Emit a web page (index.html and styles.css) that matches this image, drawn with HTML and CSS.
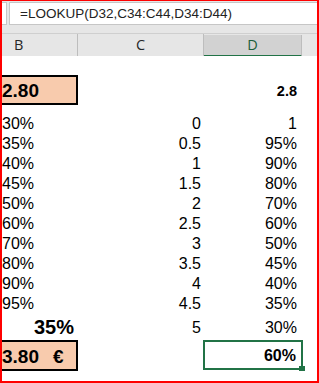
FILE: index.html
```html
<!DOCTYPE html>
<html lang="en">

<head>
    <meta charset="UTF-8">
    <meta name="viewport" content="width=device-width, initial-scale=1.0">
    <title>LOOKUP</title>
    <link rel="stylesheet" href="styles.css">
</head>

<body>
    <div class="sheet">
        <!-- formula bar -->
        <div class="topbar">
            <div class="namebox"></div>
            <div class="formula">=LOOKUP(D32,C34:C44,D34:D44)</div>
        </div>

        <!-- column headers -->
        <div class="headers">
            <div class="hcell hb">B</div>
            <div class="hcell hc">C</div>
            <div class="hcell hd">D</div>
            <div class="hcell he"></div>
        </div>

        <div class="grid">
            <div class="row gap-top"></div>

            <div class="row box-row">
                <div class="cell b money">2.80</div>
                <div class="cell c"></div>
                <div class="cell d input">2.8</div>
            </div>

            <div class="row gap-mid"></div>

            <div class="row"><div class="cell b">30%</div><div class="cell c">0</div><div class="cell d">1</div></div>
            <div class="row"><div class="cell b">35%</div><div class="cell c">0.5</div><div class="cell d">95%</div></div>
            <div class="row"><div class="cell b">40%</div><div class="cell c">1</div><div class="cell d">90%</div></div>
            <div class="row"><div class="cell b">45%</div><div class="cell c">1.5</div><div class="cell d">80%</div></div>
            <div class="row"><div class="cell b">50%</div><div class="cell c">2</div><div class="cell d">70%</div></div>
            <div class="row"><div class="cell b">60%</div><div class="cell c">2.5</div><div class="cell d">60%</div></div>
            <div class="row"><div class="cell b">70%</div><div class="cell c">3</div><div class="cell d">50%</div></div>
            <div class="row"><div class="cell b">80%</div><div class="cell c">3.5</div><div class="cell d">45%</div></div>
            <div class="row"><div class="cell b">90%</div><div class="cell c">4</div><div class="cell d">40%</div></div>
            <div class="row"><div class="cell b">95%</div><div class="cell c">4.5</div><div class="cell d">35%</div></div>

            <div class="row tall-row">
                <div class="cell b result">35%</div>
                <div class="cell c">5</div>
                <div class="cell d">30%</div>
            </div>

            <div class="row box-row">
                <div class="cell b money total">3.80<span class="euro">€</span></div>
                <div class="cell c"></div>
                <div class="cell d selected">60%<span class="handle"></span></div>
            </div>
        </div>
    </div>
</body>

</html>
```

FILE: styles.css
```css
* {
    margin: 0;
    padding: 0;
    box-sizing: border-box;
}

body {
    background: #fff;
    font-family: "Liberation Sans", Arial, sans-serif;
    color: #000;
}

/* red frame round the whole capture */
.sheet {
    width: 319px;
    height: 383px;
    border: solid #ff0000;
    border-width: 1px 2px 2px 2px;
    overflow: hidden;
    display: flex;
    flex-direction: column;
}

.topbar {
    height: 32px;
    background: #e6e6e6;
    display: flex;
    padding-top: 1px;
    align-items: flex-start;
}

.namebox {
    width: 5px;
    height: 23px;
    background: #fff;
    border: 1px solid #c6c6c6;
    border-left: none;
}

.formula {
    flex: 1;
    height: 23px;
    margin-left: 2px;
    background: #fff;
    border: 1px solid #c6c6c6;
    border-right: none;
    padding-left: 10px;
    font-family: "Liberation Sans", Arial, sans-serif;
    font-size: 13.5px;
    line-height: 21px;
    color: #222;
}

.headers {
    height: 23px;
    display: grid;
    grid-template-columns: 76px 126px 98px 1fr;
    background: #e6e6e6;
    border-top: 1px solid #cfcfcf;
    font-family: "Open Sans", "Noto Sans", sans-serif;
    font-size: 14.5px;
    color: #262626;
}

.hcell {
    border-right: 1px solid #bdbdbd;
    border-bottom: 1px solid #bdbdbd;
    line-height: 21px;
    text-align: center;
}

.hb {
    text-align: left;
    padding-left: 12px;
}

.hd {
    background: #d2d2d2;
    margin-top: 1px;
    border-bottom: 2px solid #217346;
    color: #1d5f3a;
    line-height: 20px;
}

.he {
    border-right: none;
}

.grid {
    flex: 1;
    background: #fff;
}

.row {
    display: grid;
    grid-template-columns: 76px 126px 98px 1fr;
    height: 20px;
    font-size: 16px;
    line-height: 20px;
}

.gap-top {
    height: 19px;
}

.gap-mid {
    height: 10px;
}

.cell.c {
    text-align: right;
    padding-right: 3px;
}

.cell.d {
    text-align: right;
    padding-right: 5px;
}

.box-row {
    height: 29px;
}

.money {
    background: #f8cbad;
    border: 2px solid #000;
    border-left: none;
    font-size: 19px;
    font-weight: bold;
    line-height: 25px;
    padding-top: 1px;
}

.euro {
    margin-left: 14px;
}

.total {
    padding-top: 2px;
}

.input {
    font-size: 14.5px;
    font-weight: bold;
    padding-top: 6px;
}

.tall-row {
    height: 26px;
}

.tall-row .cell.c,
.tall-row .cell.d {
    padding-top: 4px;
}

.result {
    font-size: 20px;
    font-weight: bold;
    line-height: 26px;
    text-align: right;
    padding-right: 4px;
}

.selected {
    position: relative;
    margin-left: -1px;
    margin-right: -1px;
    height: 30px;
    border: 2px solid #217346;
    font-size: 16px;
    font-weight: bold;
    line-height: 24px;
    padding-right: 4px;
    padding-top: 2px;
}

.handle {
    position: absolute;
    right: -4px;
    bottom: -3px;
    width: 6px;
    height: 5px;
    background: #217346;
}
```
